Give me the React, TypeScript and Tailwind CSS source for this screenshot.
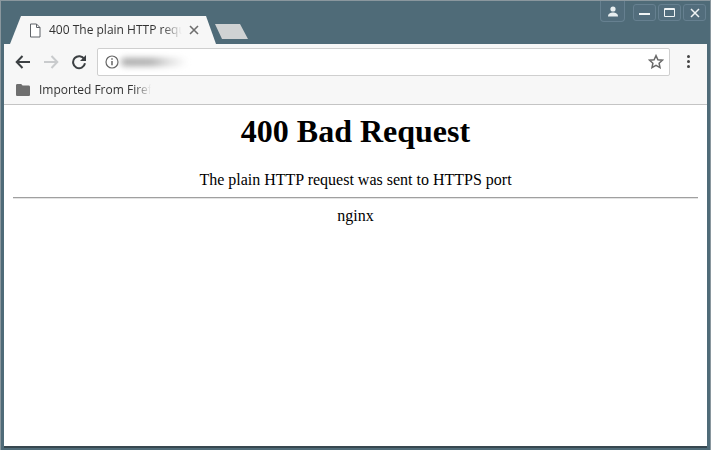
import React from "react";

function WinBtn({ children }: { children: React.ReactNode }) {
  return (
    <div className="w-[23px] h-[17px] rounded-[3px] border border-[#668090] bg-[#526d7c] flex items-center justify-center">
      {children}
    </div>
  );
}

export default function App() {
  return (
    <div className="w-[711px] h-[450px] bg-[#4f6b78] border border-[#8a979e] border-b-0 flex flex-col overflow-hidden font-['Liberation_Sans',sans-serif]">
      <div className="h-[43px] flex shrink-0 pl-[9px] relative">
        <div className="mt-[15px] w-[206px] h-[28px] bg-[#f7f7f7] [clip-path:polygon(0_100%,11px_0,196px_0,100%_100%)] flex items-center pl-[19px] shrink-0">
          <svg width="12" height="15" viewBox="0 0 12 15" fill="none" stroke="#5f6368" strokeWidth="1" className="shrink-0">
            <path d="M1.5 1h6l3.5 3.5V14H1.5z" fill="#fff" />
            <path d="M7.5 1v3.5H11" />
          </svg>
          <div className="ml-[8px] w-[133px] overflow-hidden whitespace-nowrap font-['Open_Sans',sans-serif] text-[12px] leading-[16px] text-[#333] [mask-image:linear-gradient(to_right,#000_85%,transparent)]">
            400 The plain HTTP request was sent
          </div>
          <svg width="10" height="10" viewBox="0 0 10 10" stroke="#6e6e6e" strokeWidth="1.6" className="ml-[7px] shrink-0">
            <path d="M1 1l8 8M9 1l-8 8" />
          </svg>
        </div>
        <div className="mt-[23px] ml-[-1px] w-[33px] h-[15px] bg-[#cfd2d3] [clip-path:polygon(0_0,25px_0,100%_100%,7px_100%)]" />
        <div className="absolute right-[4px] top-0 flex items-start">
          <div className="w-[25px] h-[21px] rounded-b-[4px] border border-t-0 border-[#668090] bg-[#526d7c] flex items-center justify-center mr-[8px]">
            <svg width="12" height="11" viewBox="0 0 12 11" fill="#e8eef0">
              <circle cx="6" cy="3" r="2.6" />
              <path d="M1 10.5c0-3 2.5-4 5-4s5 1 5 4z" />
            </svg>
          </div>
          <div className="flex gap-[2px] mt-[3px]">
            <WinBtn><div className="w-[11px] h-[2px] bg-[#f0f4f5] mt-[3px]" /></WinBtn>
            <WinBtn><div className="w-[11px] h-[9px] rounded-[1px] border border-t-2 border-[#f0f4f5]" /></WinBtn>
            <WinBtn>
              <svg width="10" height="10" viewBox="0 0 10 10" stroke="#f0f4f5" strokeWidth="1.5">
                <path d="M1 1l8 8M9 1l-8 8" />
              </svg>
            </WinBtn>
          </div>
        </div>
      </div>

      <div className="flex-1 mx-[3px] mb-[4px] bg-white flex flex-col min-h-0 shadow-[0_2px_0_#37474f]">
        <div className="h-[33px] bg-[#f7f7f7] flex items-center shrink-0 pl-[11px] pr-[17px] pt-[2px]">
          <svg width="16" height="14" viewBox="0 0 16 14" fill="none" stroke="#3c4043" strokeWidth="2" className="shrink-0">
            <path d="M15 7H2M7.5 1L1.7 7l5.8 6" />
          </svg>
          <svg width="16" height="14" viewBox="0 0 16 14" fill="none" stroke="#c9cbcd" strokeWidth="2" className="ml-[12px] shrink-0">
            <path d="M1 7h13M8.5 1l5.8 6-5.8 6" />
          </svg>
          <svg width="16" height="16" viewBox="0 0 16 16" fill="none" className="ml-[12px] shrink-0">
            <path d="M13.3 5.2A6 6 0 1 0 14 9.3" stroke="#3c4043" strokeWidth="2" />
            <path d="M15 1v6H9z" fill="#3c4043" />
          </svg>
          <div className="ml-[10px] flex-1 h-[28px] bg-white rounded-[2px] border border-[#cfcfcf] flex items-center pl-[7px] pr-[5px]">
            <svg width="14" height="14" viewBox="0 0 14 14" fill="none" stroke="#666" className="shrink-0">
              <circle cx="7" cy="7" r="6" strokeWidth="1.2" />
              <path d="M7 6v4.2M7 3.3v1.5" strokeWidth="1.5" />
            </svg>
            <div className="ml-[2px] w-[66px] h-[8px] rounded-full bg-[linear-gradient(to_right,#a8a8a8,#ababab_45%,#e0e0e0_75%,#fff)] blur-[3px]" />
            <svg width="16" height="15" viewBox="0 0 16 15" fill="none" stroke="#6a6a6a" strokeWidth="1.5" className="ml-auto shrink-0">
              <path d="M8 1.6l1.9 4.1 4.5.5-3.3 3 .9 4.4L8 11.4l-4 2.2.9-4.4-3.3-3 4.5-.5z" />
            </svg>
          </div>
          <div className="ml-[17px] flex flex-col gap-[2px] shrink-0">
            <div className="w-[3px] h-[3px] rounded-full bg-[#444]" />
            <div className="w-[3px] h-[3px] rounded-full bg-[#444]" />
            <div className="w-[3px] h-[3px] rounded-full bg-[#444]" />
          </div>
        </div>
        <div className="h-[28px] bg-[#f7f7f7] border-b border-[#c4c4c4] flex items-center shrink-0 pl-[12px] pb-[1px]">
          <svg width="14" height="12" viewBox="0 0 14 12" fill="#6f6f6f" className="shrink-0">
            <path d="M0 1.3C0 .6.6 0 1.3 0h3.9l1.4 1.6h6.1c.7 0 1.3.6 1.3 1.3v7.8c0 .7-.6 1.3-1.3 1.3H1.3C.6 12 0 11.4 0 10.7z" />
          </svg>
          <div className="ml-[9px] w-[112px] overflow-hidden whitespace-nowrap font-['Open_Sans',sans-serif] text-[12px] leading-[16px] text-[#333] [mask-image:linear-gradient(to_right,#000_85%,transparent)]">
            Imported From Firefox
          </div>
        </div>
        <div className="flex-1 pl-[9px] pr-[9px] pt-[8px] text-center text-black font-['Liberation_Serif',serif] text-[16px] leading-[18px]">
          <h1 className="text-[32px] leading-[37px] font-bold">400 Bad Request</h1>
          <p className="mt-[21px]">The plain HTTP request was sent to HTTPS port</p>
          <div className="mt-[8px] h-[2px] bg-[#a0a0a0] border-b border-[#e4e4e4]" />
          <p className="mt-[8px]">nginx</p>
        </div>
      </div>
    </div>
  );
}
